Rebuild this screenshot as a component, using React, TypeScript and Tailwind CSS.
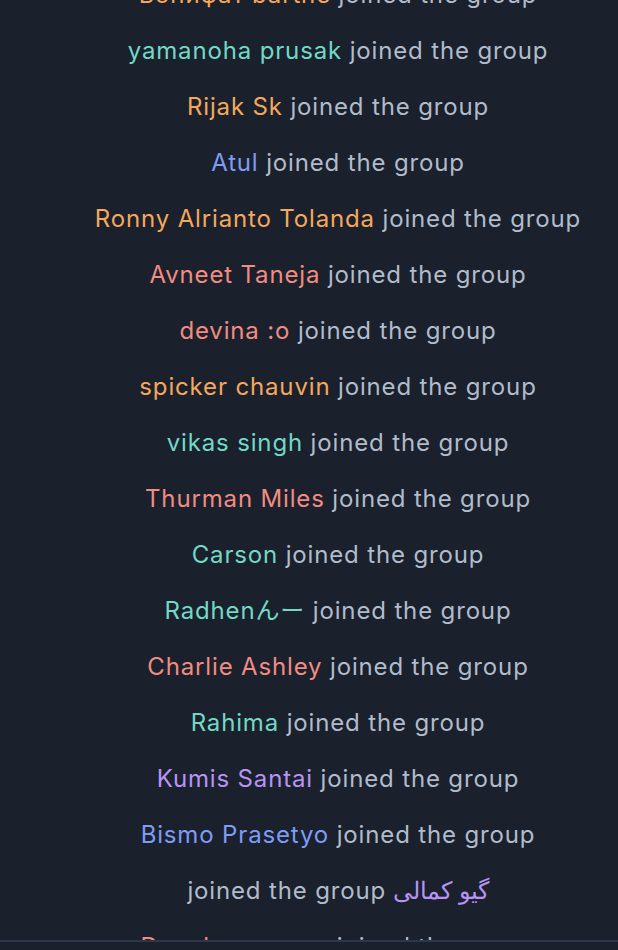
import React from "react";

type Row = { name: string; color: string };

const rows: Row[] = [
  { name: "Бонифат barthe", color: "text-[#f5a85c]" },
  { name: "yamanoha prusak", color: "text-[#72d9c6]" },
  { name: "Rijak Sk", color: "text-[#f5a85c]" },
  { name: "Atul", color: "text-[#7f9cf5]" },
  { name: "Ronny Alrianto Tolanda", color: "text-[#f5a85c]" },
  { name: "Avneet Taneja", color: "text-[#f28c82]" },
  { name: "devina :o", color: "text-[#f28c82]" },
  { name: "spicker chauvin", color: "text-[#f5a85c]" },
  { name: "vikas singh", color: "text-[#72d9c6]" },
  { name: "Thurman Miles", color: "text-[#f28c82]" },
  { name: "Carson", color: "text-[#72d9c6]" },
  { name: "Radhenんー", color: "text-[#72d9c6]" },
  { name: "Charlie Ashley", color: "text-[#f28c82]" },
  { name: "Rahima", color: "text-[#72d9c6]" },
  { name: "Kumis Santai", color: "text-[#b794f4]" },
  { name: "Bismo Prasetyo", color: "text-[#7f9cf5]" },
  { name: "گیو کمالی", color: "text-[#b794f4]" },
  { name: "Danuk sumarna", color: "text-[#f28c82]" },
];

export default function App() {
  return (
    <div
      className="w-[618px] h-[950px] bg-[#1a202c] flex flex-col overflow-hidden"
      style={{ fontFamily: "Inter, 'Noto Sans', 'Noto Sans CJK JP', sans-serif" }}
    >
      <div className="h-[940px] overflow-hidden pl-[58px]">
        <div className="mt-[-33px] flex flex-col">
          {rows.map((r, i) => (
            <div
              key={i}
              dir="auto"
              className="h-14 text-center text-[24px] leading-[56px] tracking-[0.85px] text-[#b1bccb] whitespace-nowrap"
            >
              <span className={r.color}>{r.name}</span> joined the group
            </div>
          ))}
        </div>
      </div>
      <div className="flex-1 border-t-2 border-[#2d3748] bg-[#1a202c]" />
    </div>
  );
}
